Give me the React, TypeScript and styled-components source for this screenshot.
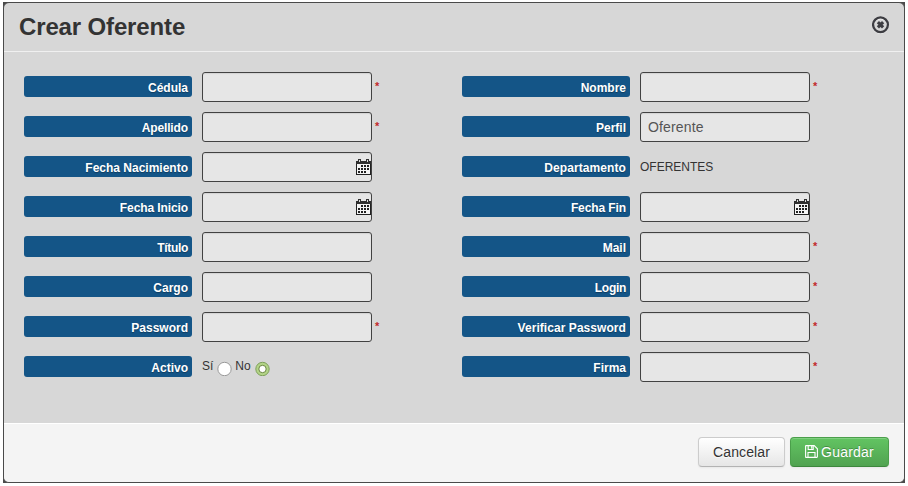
import React from 'react';
import styled, { createGlobalStyle, css } from 'styled-components';

const Global = createGlobalStyle`
  * { box-sizing: border-box; }
  body {
    margin: 0;
    background: #fff;
    color: #333;
    font: 12px/20px "Liberation Sans", Arial, Helvetica, sans-serif;
  }
`;

const Backdrop = styled.div`
  width: 908px;
  height: 486px;
  padding: 2px 3px 3px;
`;

const Frame = styled.div`
  width: 902px;
  height: 481px;
  background: #4a4a4a;
`;

const Modal = styled.section`
  display: flex;
  flex-direction: column;
  width: 902px;
  height: 481px;
  border: 1px solid #4a4a4a;
  border-radius: 6px;
  background: #d7d7d7;
  overflow: hidden;
`;

const Header = styled.header`
  display: flex;
  justify-content: space-between;
  height: 49px;
  padding: 9px 14px 0 15px;
  border-bottom: 1px solid #f0f0f0;
`;

const Title = styled.h3`
  margin: 0;
  font-size: 24px;
  line-height: 30px;
  font-weight: bold;
  letter-spacing: -0.14px;
`;

const Close = styled.button`
  width: 18px;
  height: 18px;
  margin-top: 4px;
  padding: 0;
  border: 0;
  background: none;
  svg { display: block; }
`;

const Body = styled.div`
  flex: 1;
  display: grid;
  grid-template-columns: 438px 1fr;
  grid-auto-rows: 30px;
  row-gap: 10px;
  padding: 20px 20px 0;
`;

const Row = styled.div`
  display: flex;
  align-items: flex-start;
`;

const Label = styled.label<{ $tracking?: number }>`
  width: 168px;
  height: 21px;
  margin: 4px 10px 0 0;
  padding: 2px 4px 0 0;
  border-radius: 3px;
  background: #145587;
  color: #fff;
  font-weight: bold;
  line-height: 21px;
  letter-spacing: ${p => p.$tracking ?? 0}px;
  text-align: right;
  text-shadow: 0 1px 1px rgba(0, 0, 0, 0.3);
`;

const Field = styled.div`
  display: flex;
  align-items: center;
  width: 170px;
  height: 30px;
  border: 1px solid #424242;
  border-radius: 3px;
  background: #e6e6e6;
  box-shadow: inset 0 1px 1px rgba(0, 0, 0, 0.08);
`;

const Input = styled.input`
  flex: 1;
  min-width: 0;
  height: 28px;
  padding: 0 7px;
  border: 0;
  outline: 0;
  background: transparent;
  color: #555;
  font: 14px "Liberation Sans", Arial, sans-serif;
  letter-spacing: 0.15px;
`;

const Required = styled.span`
  margin: 4px 0 0 3px;
  color: #c22a2a;
  font-size: 11px;
  font-weight: bold;
  line-height: 20px;
`;

const Value = styled.span`
  padding-top: 5px;
`;

const Options = styled.div`
  display: flex;
  padding-top: 4px;
`;

const RadioIcon = styled.svg`
  display: block;
  margin: 5px 3px 0 4px;
`;

const Footer = styled.footer`
  display: flex;
  justify-content: flex-end;
  gap: 5px;
  height: 59px;
  padding: 13px 15px 0;
  border-top: 1px solid #fff;
  background: #f4f4f4;
`;

const Button = styled.button<{ $primary?: boolean }>`
  display: flex;
  align-items: center;
  justify-content: center;
  gap: 3px;
  width: 87px;
  height: 30px;
  padding: 0 0 1px;
  border: 1px solid #ccc;
  border-bottom-color: #b3b3b3;
  border-radius: 4px;
  background: linear-gradient(#fff, #e6e6e6);
  color: #333;
  font: 14px/20px "Liberation Sans", Arial, sans-serif;
  letter-spacing: 0.1px;
  text-shadow: 0 1px 1px rgba(255, 255, 255, 0.75);
  box-shadow: inset 0 1px 0 rgba(255, 255, 255, 0.2), 0 1px 2px rgba(0, 0, 0, 0.05);
  ${p => p.$primary && css`
    width: 99px;
    border-color: #4b9f4b #4b9f4b #3d873d;
    background: linear-gradient(#62c462, #51a351);
    color: #fff;
    letter-spacing: 0.2px;
    text-shadow: 0 -1px 0 rgba(0, 0, 0, 0.25);
  `}
`;

const CloseIcon = () => (
  <svg width="18" height="18" viewBox="0 0 18 18" fill="none">
    <circle cx="8.5" cy="9.7" r="7.2" stroke="#fff" strokeOpacity=".6" strokeWidth="2" />
    <circle cx="8.500" cy="8.8" r="7.4" stroke="#3d3d42" strokeWidth="2.300" />
    <path d="M5.9 6.200l5.200 5.200M11.100 6.200l-5.200 5.200" stroke="#3d3d42" strokeWidth="3.100" />
  </svg>
);

const CalendarIcon = () => (
  <svg width="15" height="16" viewBox="0 0 15 16" shapeRendering="crispEdges">
    <rect x=".5" y="2.5" width="14" height="13" rx="1" fill="#f5f5f5" stroke="#222" />
    <rect x="0" y="2" width="15" height="3" fill="#303030" />
    <rect x="2.5" y=".5" width="2" height="3" fill="#ddd" stroke="#303030" />
    <rect x="10.5" y=".5" width="2" height="3" fill="#ddd" stroke="#303030" />
    <path
      d="M5 6h2v2H5zM8 6h2v2H8zM11 6h2v2h-2zM2 9h2v2H2zM5 9h2v2H5zM8 9h2v2H8zM11 9h2v2h-2zM2 12h2v2H2zM5 12h2v2H5zM8 12h2v2H8z"
      fill="#222"
    />
  </svg>
);

const Radio = ({ checked }: { checked?: boolean }) => (
  <RadioIcon width="15" height="15" viewBox="0 0 15 15">
    <circle cx="7.5" cy="8" r="6.7" fill={checked ? '#b3d487' : '#fff'} stroke={checked ? '#7fa05c' : '#999'} />
    {checked && <circle cx="7.5" cy="8" r="3.7" fill="#fff" stroke="#69843f" />}
  </RadioIcon>
);

const SaveIcon = () => (
  <svg width="13" height="13" viewBox="0 0 13 13" fill="none" stroke="#fff" strokeWidth="1.1">
    <path d="M.6 1.2q0-.6.6-.6h8l3.2 3.2v8q0 .6-.6.6H1.2q-.6 0-.6-.6z" />
    <path d="M3.2.8v3.7h5V.8M6.7 1v2.7M3 12V7.5h7V12" />
  </svg>
);

type Item = {
  label: string;
  tracking?: number;
  kind?: 'date' | 'text' | 'radio';
  value?: string;
  required?: boolean;
};

const items: Item[] = [
  { label: 'Cédula', required: true },
  { label: 'Nombre', required: true },
  { label: 'Apellido', tracking: -0.12, required: true },
  { label: 'Perfil', value: 'Oferente' },
  { label: 'Fecha Nacimiento', kind: 'date' },
  { label: 'Departamento', tracking: 0.08, kind: 'text', value: 'OFERENTES' },
  { label: 'Fecha Inicio', tracking: -0.1, kind: 'date' },
  { label: 'Fecha Fin', tracking: -0.1, kind: 'date' },
  { label: 'Título', tracking: -0.3 },
  { label: 'Mail', required: true },
  { label: 'Cargo' },
  { label: 'Login', tracking: -0.3, required: true },
  { label: 'Password', required: true },
  { label: 'Verificar Password', tracking: 0.06, required: true },
  { label: 'Activo', kind: 'radio' },
  { label: 'Firma', required: true },
];

const Control = ({ item }: { item: Item }) => {
  if (item.kind === 'text') return <Value>{item.value}</Value>;
  if (item.kind === 'radio')
    return (
      <Options>
        Sí <Radio /> No <Radio checked />
      </Options>
    );
  return (
    <Field>
      <Input defaultValue={item.value} aria-label={item.label} />
      {item.kind === 'date' && <CalendarIcon />}
    </Field>
  );
};

export default function App() {
  return (
    <Backdrop>
      <Global />
      <Frame>
        <Modal>
          <Header>
            <Title>Crear Oferente</Title>
            <Close aria-label="Cerrar"><CloseIcon /></Close>
          </Header>
          <Body>
            {items.map(item => (
              <Row key={item.label}>
                <Label $tracking={item.tracking}>{item.label}</Label>
                <Control item={item} />
                {item.required && <Required>*</Required>}
              </Row>
            ))}
          </Body>
          <Footer>
            <Button>Cancelar</Button>
            <Button $primary><SaveIcon />Guardar</Button>
          </Footer>
        </Modal>
      </Frame>
    </Backdrop>
  );
}
